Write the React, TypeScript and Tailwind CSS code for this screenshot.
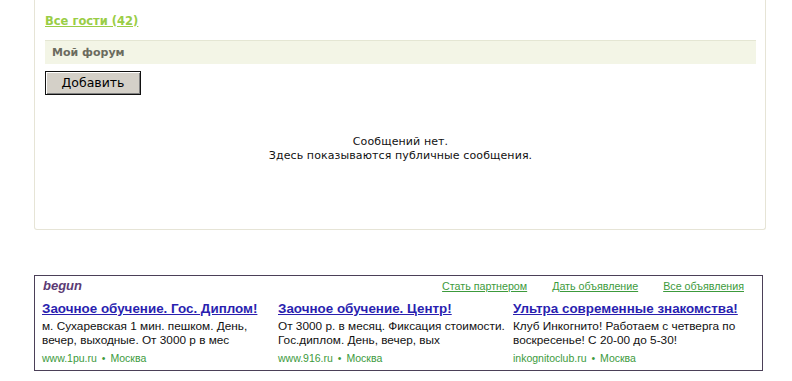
import React from "react";

const ads = [
  {
    title: "Заочное обучение. Гос. Диплом!",
    text: "м. Сухаревская 1 мин. пешком. День, вечер, выходные. От 3000 р в мес",
    url: "www.1pu.ru",
  },
  {
    title: "Заочное обучение. Центр!",
    text: "От 3000 р. в месяц. Фиксация стоимости. Гос.диплом. День, вечер, вых",
    url: "www.916.ru",
  },
  {
    title: "Ультра современные знакомства!",
    text: "Клуб Инкогнито! Работаем с четверга по воскресенье! С 20-00 до 5-30!",
    url: "inkognitoclub.ru",
  },
];

export default function App() {
  return (
    <div className="w-[792px] h-[381px] bg-white overflow-hidden">
      <div className="pl-[34px] w-[766px]">
        <div className="border-x border-b border-[#e6e4d6] rounded-b-[3px] pl-[10px] pr-[9px] pt-[13px] h-[230px] font-['DejaVu_Sans',sans-serif]">
          <a
            href="#"
            className="text-[11.5px] font-bold text-[#9acd45] underline leading-[16px] block w-fit"
          >
            Все гости (42)
          </a>
          <div className="mt-[11px] h-[24px] bg-[#f3f5e6] border-t border-[#e4e6d3] flex items-center pl-[7px] pt-[2px] text-[11px] font-bold text-[#6b6b5e]">
            Мой форум
          </div>
          <button className="mt-[7px] w-[96px] h-[24px] bg-[#d4d0c8] border border-[#111] shadow-[inset_1px_1px_0_#fff,inset_-1px_-1px_0_#808080] text-[12.5px] text-black flex items-center justify-center font-['DejaVu_Sans',sans-serif]">
            Добавить
          </button>
          <div className="mt-[40px] text-center text-[11px] leading-[14px] text-[#111] tracking-[0.1px]">
            <div>Сообщений нет.</div>
            <div>Здесь показываются публичные сообщения.</div>
          </div>
        </div>
      </div>
      <div className="ml-[34px] mt-[45px] w-[729px] h-[96px] border border-[#4b4058] px-[7px] pt-[2px] font-['Liberation_Sans',Arial,sans-serif]">
        <div className="flex items-center h-[16px]">
          <span className="text-[13px] font-bold italic text-[#5b3a74] ml-[1px]">begun</span>
          <div className="ml-auto flex gap-[25px] pr-[11px] text-[10.7px] text-[#3c9a3c]">
            <a href="#" className="underline">Стать партнером</a>
            <a href="#" className="underline">Дать объявление</a>
            <a href="#" className="underline">Все объявления</a>
          </div>
        </div>
        <div className="grid grid-cols-[236px_235px_1fr] mt-[7px]">
          {ads.map((ad) => (
            <div key={ad.url}>
              <a href="#" className="block text-[13.4px] font-bold text-[#2a1fb0] underline leading-[16px]">
                {ad.title}
              </a>
              <div className="mt-[2px] text-[11.8px] leading-[14px] text-[#111] pr-[8px]">{ad.text}</div>
              <div className="mt-[5px] text-[10.5px] leading-[12px] text-[#3c9a3c]">
                {ad.url} <span className="mx-[2px]">•</span> Москва
              </div>
            </div>
          ))}
        </div>
      </div>
    </div>
  );
}
